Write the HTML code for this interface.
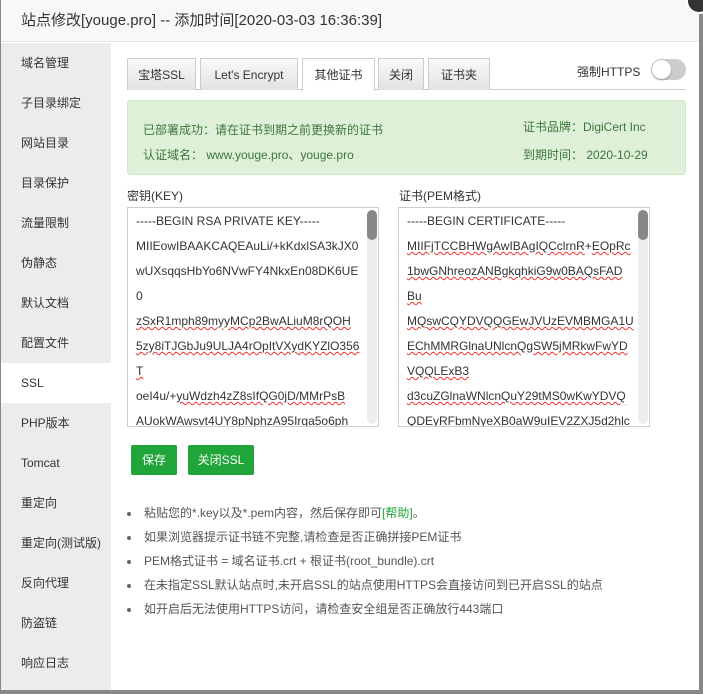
<!DOCTYPE html>
<html><head><meta charset="utf-8"><style>
*{box-sizing:border-box;margin:0;padding:0}
body{width:703px;height:694px;background:#888;font-family:"Liberation Sans","Noto Sans CJK SC",sans-serif;font-size:12px;color:#333;position:relative;overflow:hidden}
.dlg{position:absolute;left:1px;top:0;width:698px;height:690px;background:#fff}
.hd{height:42px;background:#f8f8f8;border-bottom:1px solid #e6e6e6;font-size:15px;line-height:42px;padding-left:20px;color:#333}
.side{position:absolute;left:0;top:43px;width:110px;bottom:0;background:#ececec}
.side div{height:40px;line-height:40px;padding-left:20px;font-size:12px;color:#333}
.side .on{background:#fff}
.main{position:absolute;left:110px;top:43px;right:0;bottom:0}
.tabs{position:absolute;left:16px;top:15px;width:559px;height:32px;border-bottom:1px solid #ccc}
.tab{position:absolute;top:0;height:32px;line-height:32px;text-align:center;border:1px solid #ccc;border-bottom:none;background:linear-gradient(#fafafa,#e2e2e2);font-size:12px;color:#333}
.tab.on{background:#fff;height:33px}
.alert{position:absolute;left:16px;top:57px;width:559px;height:75px;background:#dff0d8;border:1px solid #d0e9c6;border-radius:3px;color:#3c763d;font-size:12px}
.alert span{position:absolute}
.lbl{position:absolute;top:144px;font-size:12px}
.ta{position:absolute;top:164px;height:220px;border:1px solid #ccc;overflow:hidden;padding:1px 0 0 8px;font-size:12px;line-height:25px;white-space:pre;color:#333}
.ta .sb{position:absolute;right:1px;top:2px;width:10px;height:214px;background:#eee;border-radius:5px}
.ta .sb i{position:absolute;left:0;top:0;width:10px;height:30px;background:#888;border-radius:5px}
u{text-decoration:underline wavy #e33;text-decoration-thickness:1px}
.btn{position:absolute;top:402px;height:30px;line-height:30px;background:#20a53a;color:#fff;border-radius:2px;text-align:center;font-size:12px}
ul{position:absolute;left:14px;top:458px;list-style:none;font-size:12px;color:#555}
li{height:24px;line-height:24px;position:relative;padding-left:19px}
li:before{content:"";position:absolute;left:2px;top:11px;width:4px;height:4px;border-radius:50%;background:#666}
.tog{position:absolute;left:540px;top:16px;width:35px;height:21px;border-radius:11px;background:#ccc}
.tog i{position:absolute;left:1px;top:1px;width:19px;height:19px;border-radius:50%;background:#fff;box-shadow:0 1px 2px rgba(0,0,0,.3)}
.x{position:absolute;left:686px;top:-12px;width:26px;height:26px;border-radius:50%;background:#333;border:2px solid #fff}
</style></head><body>
<div class="dlg">
<div class="hd">站点修改[youge.pro] -- 添加时间[2020-03-03 16:36:39]</div>
<div class="side">
<div>域名管理</div><div>子目录绑定</div><div>网站目录</div><div>目录保护</div><div>流量限制</div><div>伪静态</div><div>默认文档</div><div>配置文件</div><div class="on">SSL</div><div>PHP版本</div><div>Tomcat</div><div>重定向</div><div>重定向(测试版)</div><div>反向代理</div><div>防盗链</div><div>响应日志</div>
</div>
<div class="main">
<div class="tabs">
<div class="tab" style="left:0;width:69px">宝塔SSL</div>
<div class="tab" style="left:73px;width:98px">Let's Encrypt</div>
<div class="tab on" style="left:175px;width:73px">其他证书</div>
<div class="tab" style="left:251px;width:46px">关闭</div>
<div class="tab" style="left:301px;width:62px">证书夹</div>
</div>
<div style="position:absolute;left:466px;top:20px;font-size:12px">强制HTTPS</div>
<div class="tog"><i></i></div>
<div class="alert">
<span style="left:15px;top:20px">已部署成功：请在证书到期之前更换新的证书</span>
<span style="left:15px;top:45px">认证域名： www.youge.pro、youge.pro</span>
<span style="left:395px;top:17px">证书品牌：DigiCert Inc</span>
<span style="left:395px;top:45px">到期时间： 2020-10-29</span>
</div>
<div class="lbl" style="left:16px">密钥(KEY)</div>
<div class="lbl" style="left:288px">证书(PEM格式)</div>
<div class="ta" style="left:16px;width:252px">-----BEGIN RSA PRIVATE KEY-----
MIIEowIBAAKCAQEAuLi/+kKdxlSA3kJX0
wUXsqqsHbYo6NVwFY4NkxEn08DK6UE
0
<u>zSxR1mph89myyMCp2BwALiuM8rQOH</u>
<u>5zy8iTJGbJu9ULJA4rOpItVXydKYZlO356</u>
<u>T</u>
oeI4u/+<u>yuWdzh4zZ8sIfQG0jD/MMrPsB</u>
<u>AUokWAwsvt4UY8pNphzA95Irga5o6ph</u>
<u>E</u><div class="sb"><i></i></div></div>
<div class="ta" style="left:287px;width:252px">-----BEGIN CERTIFICATE-----
<u>MIIFjTCCBHWgAwIBAgIQCclrnR</u>+<u>EOpRc</u>
<u>1bwGNhreozANBgkqhkiG9w0BAQsFAD</u>
<u>Bu</u>
<u>MQswCQYDVQQGEwJVUzEVMBMGA1U</u>
<u>EChMMRGlnaUNlcnQgSW5jMRkwFwYD</u>
<u>VQQLExB3</u>
<u>d3cuZGlnaWNlcnQuY29tMS0wKwYDVQ</u>
<u>QDEyRFbmNyeXB0aW9uIEV2ZXJ5d2hlc</u>
<u>mUg</u><div class="sb"><i></i></div></div>
<div class="btn" style="left:20px;width:46px">保存</div>
<div class="btn" style="left:77px;width:66px">关闭SSL</div>
<ul>
<li>粘贴您的*.key以及*.pem内容，然后保存即可<span style="color:#20a53a">[帮助]</span>。</li>
<li>如果浏览器提示证书链不完整,请检查是否正确拼接PEM证书</li>
<li>PEM格式证书 = 域名证书.crt + 根证书(root_bundle).crt</li>
<li>在未指定SSL默认站点时,未开启SSL的站点使用HTTPS会直接访问到已开启SSL的站点</li>
<li>如开启后无法使用HTTPS访问，请检查安全组是否正确放行443端口</li>
</ul>
</div>
</div>
<div class="x"></div>
</body></html>
